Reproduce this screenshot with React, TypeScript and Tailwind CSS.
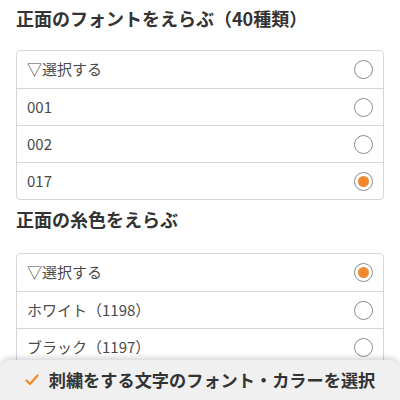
import React from 'react';

const font = { fontFamily: '"Noto Sans CJK JP", "Noto Sans", sans-serif' };

type Opt = { label: string; checked?: boolean };

function Radio({ checked }: { checked?: boolean }) {
  return (
    <span className="h-[19px] w-[19px] rounded-full border border-[#8a8a8a] bg-white flex items-center justify-center shrink-0">
      {checked && <span className="h-[11px] w-[11px] rounded-full bg-[#f0882c]" />}
    </span>
  );
}

function OptionList({ items }: { items: Opt[] }) {
  return (
    <div className="mx-4 border border-[#d6d6d6] rounded-[4px] bg-white">
      {items.map((it, i) => (
        <div
          key={i}
          className={`h-[37px] flex items-center justify-between pl-[10px] pr-[10px] ${i > 0 ? 'border-t border-[#d6d6d6]' : ''}`}
        >
          <span className="text-[15px] text-[#4a4a4a]">{it.label}</span>
          <Radio checked={it.checked} />
        </div>
      ))}
    </div>
  );
}

export default function App() {
  return (
    <div className="w-[400px] h-[400px] bg-white relative overflow-hidden" style={font}>
      <h2 className="px-4 pt-[5px] h-[50px] text-[18px] font-bold text-[#333] leading-[26px]">
        正面のフォントをえらぶ（40種類）
      </h2>
      <OptionList
        items={[
          { label: '▽選択する' },
          { label: '001' },
          { label: '002' },
          { label: '017', checked: true },
        ]}
      />
      <h2 className="px-4 pt-[6px] h-[53px] text-[18px] font-bold text-[#333] leading-[26px]">
        正面の糸色をえらぶ
      </h2>
      <OptionList
        items={[
          { label: '▽選択する', checked: true },
          { label: 'ホワイト（1198）' },
          { label: 'ブラック（1197）' },
        ]}
      />
      <div className="absolute left-0 right-0 bottom-0 h-[40px] bg-[#f0f0f0] rounded-t-[10px] shadow-[0_-2px_6px_rgba(0,0,0,0.18)] flex items-center justify-center gap-[10px]">
        <svg width="14" height="12" viewBox="0 0 14 12" fill="none">
          <path d="M1.5 6.5 L5 10 L12.5 1.5" stroke="#f0882c" strokeWidth="2.2" strokeLinecap="round" strokeLinejoin="round" />
        </svg>
        <span className="text-[17.2px] font-bold text-[#333]">刺繍をする文字のフォント・カラーを選択</span>
      </div>
    </div>
  );
}
